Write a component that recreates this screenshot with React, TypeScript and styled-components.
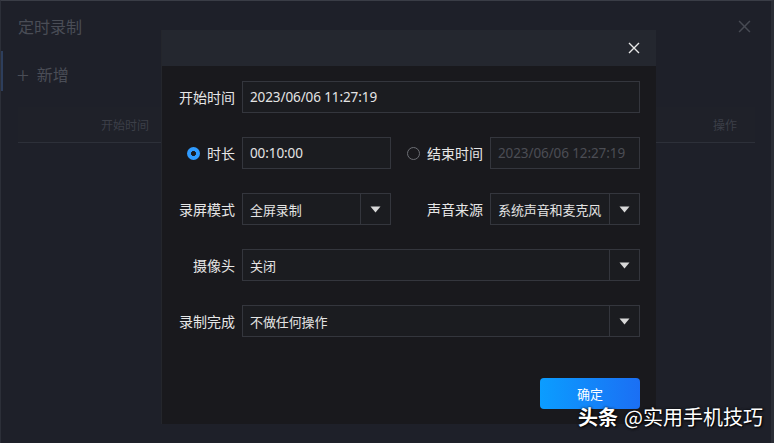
import React from "react";
import styled, { createGlobalStyle } from "styled-components";

const Global = createGlobalStyle`
  html, body { margin: 0; padding: 0; background: #1e2029; }
  body { font-family: "Noto Sans", "Noto Sans CJK SC", sans-serif; }
  * { box-sizing: border-box; }
`;

const Window = styled.div`
  position: relative;
  width: 774px;
  height: 443px;
  background: #1e2029;
  border-top: 1px solid #3a3d46;
  border-left: 1px solid #2c2f38;
  border-right: 3px solid #2a2d35;
  overflow: hidden;
  font-family: "Noto Sans CJK SC", "Noto Sans", sans-serif;
`;

const BgHeader = styled.div`
  display: flex;
  align-items: center;
  justify-content: space-between;
  height: 50px;
  padding: 0 20px 0 17px;
  color: #4a4d56;
  font-size: 16px;
`;

const BgToolbar = styled.div`
  position: relative;
  display: flex;
  align-items: center;
  gap: 8px;
  height: 46px;
  padding-left: 16px;
  color: #4a4d56;
  font-size: 16px;
  &::before {
    content: "";
    position: absolute;
    left: -1px;
    top: 0;
    width: 3px;
    height: 40px;
    background: #2d3e5c;
  }
`;

const Plus = styled.span`
  font-size: 22px;
  font-weight: 300;
  line-height: 1;
`;

const BgTable = styled.div`
  margin: 10px 16px 0 17px;
  height: 36px;
  display: grid;
  grid-template-columns: 214px 1fr 60px;
  align-items: center;
  color: #3c3f48;
  font-size: 12px;
  background: #1f2129;
  border-bottom: 1px solid #2d3039;
`;

const BgCell = styled.div`
  text-align: center;
`;

const Modal = styled.div`
  position: absolute;
  left: 160px;
  top: 29px;
  width: 495px;
  height: 394px;
  background: #19191d;
  border-left: 1px solid #24262c;
  display: flex;
  flex-direction: column;
`;

const ModalHeader = styled.div`
  height: 36px;
  background: #24272f;
  display: flex;
  align-items: center;
  justify-content: flex-end;
  padding-right: 16px;
`;

const ModalBody = styled.div`
  flex: 1;
  display: flex;
  flex-direction: column;
  gap: 24px;
  padding: 15px 16px 0 16px;
`;

const Row = styled.div`
  display: flex;
  align-items: center;
  height: 32px;
  gap: 7px;
`;

const Label = styled.div`
  width: 57px;
  flex: none;
  display: flex;
  align-items: center;
  justify-content: flex-end;
  gap: 7px;
  color: #e6e6e6;
  font-size: 14px;
  white-space: nowrap;
`;

const SideLabel = styled(Label)`
  flex: 1;
  width: auto;
`;

const Field = styled.div<{ $w?: number; $disabled?: boolean }>`
  ${(p) => (p.$w ? `width: ${p.$w}px; flex: none;` : "flex: 1;")}
  height: 32px;
  border: 1px solid #34363d;
  background: #1b1c20;
  display: flex;
  align-items: center;
  padding-left: 7px;
  color: ${(p) => (p.$disabled ? "#4b4d54" : "#e4e4e4")};
  font-family: "Noto Sans", "Noto Sans CJK SC", sans-serif;
  font-size: 13.5px;
  letter-spacing: -0.1px;
  white-space: nowrap;
  overflow: hidden;
`;

const SelectText = styled.div`
  flex: 1;
  font-family: "Noto Sans CJK SC", sans-serif;
  font-size: 13px;
  color: #e4e4e4;
`;

const ArrowBox = styled.div`
  width: 30px;
  align-self: stretch;
  border-left: 1px solid #34363d;
  display: flex;
  align-items: center;
  justify-content: center;
`;

const Radio = styled.span<{ $on?: boolean }>`
  width: 13px;
  height: 13px;
  border-radius: 50%;
  flex: none;
  ${(p) =>
    p.$on
      ? `background: radial-gradient(circle, #1b1c20 0 2.2px, #2f9bff 2.8px);`
      : `border: 1.5px solid #6d6f75;`}
`;

const Footer = styled.div`
  display: flex;
  justify-content: flex-end;
  padding: 41px 16px 15px 0;
`;

const Button = styled.button`
  width: 100px;
  height: 31px;
  border: none;
  border-radius: 4px;
  background: linear-gradient(90deg, #0b9dff, #1b6ff4);
  color: #fff;
  font-family: "Noto Sans CJK SC", sans-serif;
  font-size: 13px;
  cursor: pointer;
`;

const Watermark = styled.div`
  position: absolute;
  left: 577px;
  top: 402px;
  color: #fff;
  font-family: "Noto Sans CJK SC", sans-serif;
  font-size: 20px;
  line-height: 28px;
  text-shadow: 0 0 3px rgba(0, 0, 0, 0.8), 1px 1px 2px rgba(0, 0, 0, 0.9);
  white-space: nowrap;
  b {
    font-weight: 700;
    margin-right: 6px;
  }
`;

const CloseIcon = ({ color, size = 12 }: { color: string; size?: number }) => (
  <svg width={size} height={size} viewBox="0 0 12 12">
    <path d="M1 1L11 11M11 1L1 11" stroke={color} strokeWidth="1.4" fill="none" />
  </svg>
);

const Caret = () => (
  <svg width="11" height="7" viewBox="0 0 11 7">
    <path d="M0.5 0.5H10.5L5.5 6.5Z" fill="#d8d8d8" />
  </svg>
);

const Select = ({ value, w }: { value: string; w?: number }) => (
  <Field $w={w}>
    <SelectText>{value}</SelectText>
    <ArrowBox>
      <Caret />
    </ArrowBox>
  </Field>
);

export default function App() {
  return (
    <>
      <Global />
      <Window>
        <BgHeader>
          <span>定时录制</span>
          <CloseIcon color="#474a53" size={13} />
        </BgHeader>
        <BgToolbar>
          <Plus>+</Plus>
          <span>新增</span>
        </BgToolbar>
        <BgTable>
          <BgCell>开始时间</BgCell>
          <BgCell />
          <BgCell>操作</BgCell>
        </BgTable>

        <Modal>
          <ModalHeader>
            <CloseIcon color="#e8e8e8" size={12} />
          </ModalHeader>
          <ModalBody>
            <Row>
              <Label>开始时间</Label>
              <Field>2023/06/06 11:27:19</Field>
            </Row>
            <Row>
              <Label>
                <Radio $on />
                时长
              </Label>
              <Field $w={149}>00:10:00</Field>
              <SideLabel>
                <Radio />
                结束时间
              </SideLabel>
              <Field $w={150} $disabled>
                2023/06/06 12:27:19
              </Field>
            </Row>
            <Row>
              <Label>录屏模式</Label>
              <Select value="全屏录制" w={149} />
              <SideLabel>声音来源</SideLabel>
              <Select value="系统声音和麦克风" w={150} />
            </Row>
            <Row>
              <Label>摄像头</Label>
              <Select value="关闭" />
            </Row>
            <Row>
              <Label>录制完成</Label>
              <Select value="不做任何操作" />
            </Row>
          </ModalBody>
          <Footer>
            <Button>确定</Button>
          </Footer>
        </Modal>

        <Watermark>
          <b>头条</b>@实用手机技巧
        </Watermark>
      </Window>
    </>
  );
}
